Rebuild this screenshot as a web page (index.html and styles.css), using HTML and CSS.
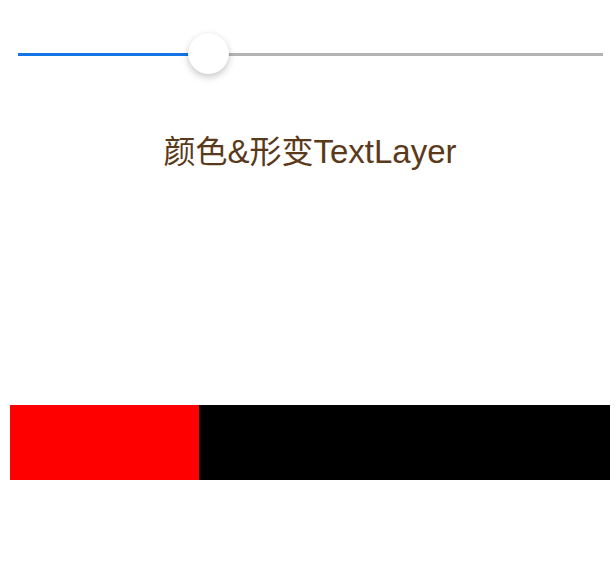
FILE: index.html
```html
<!DOCTYPE html>
<html>
<head>
<meta charset="utf-8">
<link rel="stylesheet" href="styles.css">
</head>
<body>
<div class="page">
  <div class="slider">
    <div class="track">
      <div class="fill"></div>
      <div class="rest"></div>
    </div>
    <div class="thumb"></div>
  </div>
  <div class="title"><span class="cjk">颜色</span>&amp;<span class="cjk">形变</span>TextLayer</div>
  <div class="bar">
    <div class="bar-red"></div>
    <div class="bar-black"></div>
  </div>
</div>
</body>
</html>
```
FILE: styles.css
```css
html, body {
  margin: 0;
  padding: 0;
  background: #ffffff;
}
.page {
  display: flex;
  flex-direction: column;
  width: 616px;
  height: 570px;
}
.slider {
  position: relative;
  margin: 34px 0 0 18px;
  width: 585px;
  height: 40px;
  display: flex;
  align-items: center;
}
.track {
  display: flex;
  width: 100%;
  height: 3px;
}
.fill {
  width: 191px;
  background: #1475e6;
}
.rest {
  flex: 1;
  background: #b3b3b3;
}
.thumb {
  position: absolute;
  left: 170px;
  top: -1px;
  width: 41px;
  height: 41px;
  border-radius: 50%;
  background: #ffffff;
  box-shadow: 0 3px 7px rgba(0, 0, 0, 0.22), 0 0 1px rgba(0, 0, 0, 0.08);
}
.title {
  margin-top: 57px;
  height: 36px;
  line-height: 36px;
  font-size: 33px;
  text-align: center;
  color: #5a3a1b;
  font-family: "Liberation Sans", "Noto Sans CJK SC", sans-serif;
  padding-left: 4px;
  white-space: nowrap;
}
.cjk {
  font-family: "Noto Sans CJK SC", sans-serif;
  font-size: 32px;
}
.bar {
  margin: 238px 6px 0 10px;
  height: 75px;
  display: flex;
}
.bar-red {
  width: 189px;
  background: #ff0000;
}
.bar-black {
  flex: 1;
  background: #000000;
}
```
